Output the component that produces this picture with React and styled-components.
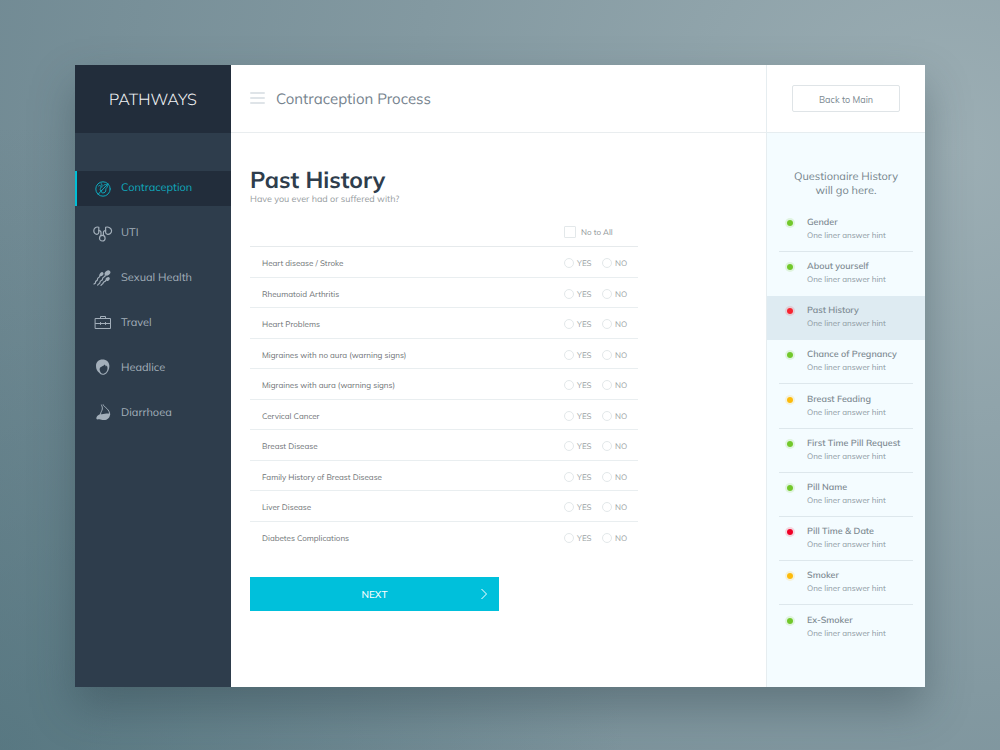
import React, { useState } from 'react';
import styled, { createGlobalStyle } from 'styled-components';

const GlobalStyle = createGlobalStyle`
  *, *::before, *::after { box-sizing: border-box; }
  body {
    margin: 0;
    font-family: Mulish, Muli, Lato, "Open Sans", sans-serif;
    text-rendering: geometricPrecision;
    color: #76838b;
  }
  h1, h2, p, ul { margin: 0; padding: 0; }
  ul { list-style: none; }
  button, input { font: inherit; margin: 0; }
`;

const Page = styled.div`
  display: grid;
  min-height: 100vh;
  padding: 65px 75px 63px;
  background:
    radial-gradient(circle at 0% 100%, rgba(75, 110, 120, 0.6), rgba(75, 110, 120, 0) 50%),
    radial-gradient(circle at 95% 20%, #9caeb4 0%, #8399a1 48%, #6c8690 100%);
`;

const Window = styled.div`
  display: grid;
  grid-template-columns: 156px minmax(0, 1fr) 159px;
  background: #fff;
  box-shadow: 0 20px 40px rgba(38, 58, 66, 0.36);
`;

const Sidebar = styled.aside`
  background: #2e3d4c;
`;

const Brand = styled.div`
  display: flex;
  align-items: center;
  justify-content: center;
  height: 68px;
  background: #222d3b;
  color: #f2f4f6;
  font-size: 16px;
  font-weight: 300;
`;

const NavList = styled.ul`
  display: grid;
  gap: 10px;
  padding-top: 38px;
`;

const NavLink = styled.a`
  display: flex;
  align-items: center;
  gap: 8px;
  height: 35px;
  padding: 0 0 4px 16px;
  border-left: 2px solid ${(p) => (p.$active ? '#00bfd6' : 'transparent')};
  background: ${(p) => (p.$active ? '#222d3b' : 'transparent')};
  color: ${(p) => (p.$active ? '#0fa9bd' : '#a3afba')};
  font-size: 11px;
  text-decoration: none;
  svg { flex: none; }
`;

const Main = styled.main`
  min-width: 0;
`;

const Header = styled.header`
  display: flex;
  align-items: center;
  gap: 11px;
  height: 68px;
  padding: 0 0 1px 19px;
  border-bottom: 1px solid #e9edef;
`;

const MenuButton = styled.button`
  display: grid;
  gap: 3px;
  width: 15px;
  padding: 0;
  border: 0;
  background: none;
  span {
    height: 2px;
    border-radius: 1px;
    background: #dfe4e8;
  }
`;

const HeaderTitle = styled.h2`
  color: #76838e;
  font-size: 15px;
  font-weight: 400;
`;

const Content = styled.form`
  padding: 33px 19px 76px;
`;

const Title = styled.h1`
  color: #2e3d4c;
  font-size: 23px;
  font-weight: 700;
  line-height: 28px;
`;

const Subtitle = styled.p`
  color: #979da1;
  font-size: 9px;
  line-height: 12px;
`;

const Questions = styled.table`
  width: 100%;
  max-width: 388px;
  margin-top: 12px;
  border-collapse: separate;
  border-spacing: 0;
  table-layout: fixed;
  th, td { padding: 0; vertical-align: middle; }
  thead tr { height: 29px; }
  thead th, thead td { border-bottom: 1px solid #e6eaec; }
  tbody tr { height: 30px; }
  tbody tr:nth-child(odd) { height: 31px; }
  tbody tr:not(:last-child) > * { border-bottom: 1px solid #e9eef0; }
`;

const Question = styled.th`
  && { padding: 2px 0 0 12px; }
  color: #6d7174;
  font-size: 8px;
  font-weight: 400;
  text-align: left;
`;

const AnswerCell = styled.td`
  && { padding-top: 2px; }
`;

const HeadCell = styled.th`
  text-align: left;
  font-weight: 400;
`;

const Choice = styled.label`
  display: flex;
  align-items: center;
  gap: ${(p) => (p.$wide ? '5px' : '3px')};
  color: ${(p) => (p.$wide ? '#8b9195' : '#999fa3')};
  font-size: 8px;
  line-height: 12px;
`;

const Tick = styled.input`
  appearance: none;
  flex: none;
  width: ${(p) => (p.type === 'radio' ? '10px' : '12px')};
  height: ${(p) => (p.type === 'radio' ? '10px' : '12px')};
  border: 1px solid #e3e8ea;
  border-radius: ${(p) => (p.type === 'radio' ? '50%' : '1px')};
  background: #fff;
  &:checked { background: #00c0db; box-shadow: inset 0 0 0 2px #fff; }
`;

const NextButton = styled.button`
  display: grid;
  grid-template-columns: 1fr auto 1fr;
  align-items: center;
  width: 100%;
  max-width: 249px;
  height: 34px;
  margin-top: 25px;
  padding: 0 12px;
  border: 0;
  background: #00c0db;
  color: #fff;
  font-size: 10px;
  font-weight: 500;
  span { grid-column: 2; }
  svg { justify-self: end; }
`;

const HistoryPanel = styled.aside`
  border-left: 1px solid #e6edf0;
  background: #f4fcff;
`;

const PanelTop = styled.div`
  display: flex;
  align-items: center;
  justify-content: center;
  height: 68px;
  border-bottom: 1px solid #e6edf0;
  background: #fff;
`;

const BackButton = styled.button`
  width: 108px;
  height: 27px;
  padding: 1px 0 0;
  border: 1px solid #dfe4e7;
  border-radius: 2px;
  background: #fff;
  color: #7b8890;
  font-size: 9px;
`;

const PanelTitle = styled.h2`
  padding: 36px 16px 11px;
  color: #74848c;
  font-size: 11px;
  font-weight: 400;
  line-height: 14px;
  text-align: center;
`;

const Step = styled.li`
  height: 44px;
  padding: 0 12px;
  background: ${(p) => (p.$active ? '#deebf2' : 'transparent')};
  &:nth-child(5n) { height: 45px; }
`;

const StepLink = styled.a`
  display: grid;
  grid-template-columns: 8px 1fr;
  column-gap: 13px;
  align-content: center;
  height: 100%;
  padding: 0 0 1px 7px;
  border-bottom: 1px solid ${(p) => (p.$divider ? '#dde7ec' : 'transparent')};
  text-decoration: none;
`;

const dotColors = { green: '#72c82b', red: '#f8232f', crimson: '#f00026', amber: '#fdbb0b' };

const Dot = styled.span`
  align-self: center;
  width: 8px;
  height: 8px;
  border: 1px solid transparent;
  border-radius: 50%;
  background: ${(p) => dotColors[p.$tone]};
  background-clip: padding-box;
  box-shadow: 0 0 0 1px ${(p) => dotColors[p.$tone]}26;
`;

const StepName = styled.span`
  color: #7c8991;
  font-size: 9px;
  font-weight: 600;
  line-height: 12px;
  white-space: nowrap;
`;

const StepHint = styled.span`
  grid-column: 2;
  color: #8c989f;
  font-size: 8px;
  line-height: 12px;
`;

const Glyph = ({ children }) => (
  <svg width="20" height="20" viewBox="0 0 20 20" fill="none" stroke="currentColor"
    strokeWidth="1" strokeLinecap="round" strokeLinejoin="round" aria-hidden="true">
    {children}
  </svg>
);

const icons = {
  contraception: (
    <Glyph>
      <circle cx="10" cy="12" r="7.2" />
      <path d="M15 6.800 5.200 17.200" />
      <path d="M10.800 8.200c2-1.800 4.400-.2 3.300 2-.6 1.100-1.600 1.300-1.300 2.500.4 1.800-1.200 3.500-3.200 3.200-1.600-.3-1.700-2-.6-3" />
      <path d="M5.600 9c1.300-1.500 2.900 0 2.200 1.600-.5 1.300-1.300 2.200 0 3.400M8.200 6.500c1 .9 1 2.200.7 3.600" />
    </Glyph>
  ),
  uti: (
    <Glyph>
      <g strokeWidth="1.200">
        <path d="M5.800 5.300C3 4.300.8 6.200.8 8.800c0 2.200 1.500 3.700 3.300 3.500 1.300-.1 1.700-1 1.700-2V5.300Z" />
        <path d="M12.600 5.300c2.800-1 6 .9 6 3.500 0 2.200-2 3.700-4 3.500-1.400-.1-2-1-2-2V5.300Z" />
        <path d="M5.800 8.600c1.500-.2 2.200.8 2.200 2v3M12.600 8.600c-1.500-.2-2.200.8-2.200 2v3" />
        <circle cx="9.300" cy="16.200" r="2.800" />
      </g>
    </Glyph>
  ),
  sexual: (
    <Glyph>
      <g fill="currentColor" stroke="none">
        <ellipse cx="14.500" cy="6" rx="3.200" ry="2.300" transform="rotate(-40 14.500 6)" />
        <ellipse cx="8.500" cy="7.200" rx="2.300" ry="1.700" transform="rotate(-40 8.500 7.200)" />
        <ellipse cx="14.700" cy="12" rx="2.300" ry="1.700" transform="rotate(-35 14.700 12)" />
      </g>
      <g strokeWidth="1.200">
        <path d="M12.300 8c.5 2.400-2.900 1.500-2.700 3.800s-2.700 1.200-2.600 3.300-2 1.600-2.300 3" />
        <path d="M6.800 8.700c.5 2.200-2.500 1.500-2.300 3.500s-2.200 1.300-2 3-1 1.100-1.500 1.800" />
        <path d="M12.700 13.300c.2 2-2.300.8-2.500 2.600s-1.700 1-2.200 2.600" />
      </g>
    </Glyph>
  ),
  travel: (
    <Glyph>
      <path d="M2.500 6.500h15v10h-15zM7.500 6.500v-2h5v2M2.500 11.500h15M7.500 10.500v2M12.500 10.500v2" />
    </Glyph>
  ),
  headlice: (
    <Glyph>
      <path fill="currentColor" stroke="none" fillRule="evenodd" d="M9.500 2.500c4 0 6.900 2.700 6.900 6.500 0 3-1.400 5.700-3.100 7.400-1 .9-2.200 1.300-3.500 1.300-1.600 0-2.700-.7-3.600-1.900C4.300 14.500 3 12 3 9 3 5.100 5.600 2.500 9.500 2.500Zm2.100 4.900c-.8 1.500-3 1.800-4.100 2.800-1 .9-1 2.300-.6 3.600.6 2 1.500 2.900 2.900 2.900 2.600 0 4.700-2.500 4.700-5.500 0-1.400-.4-2-1-2.600l-.5 1.200c-.2-.9-.7-1.700-1.400-2.400Z" />
    </Glyph>
  ),
  stomach: (
    <Glyph>
      <path d="M8.500 3c.6 1.500 1 2.500.8 4-.2 1.800-1.400 2.700-1.800 5M10.200 2.800c.5 1.700 2.200 2.200 3.600 3.700 1.800 1.800 2.900 3.600 2.900 6" />
      <path fill="currentColor" stroke="none" d="M7.200 12c3.100.8 6.200-1.200 9.900-.3.100 3.700-2.500 6.400-6.200 6.400-2.200 0-3-.9-4.700-.8-1.300.1-2.300.4-2.700-.3-.5-1 .2-2.800 1.300-3.600.8-.6 1.600-.7 2.400-1.400Z" />
    </Glyph>
  ),
};

const navItems = [
  ['contraception', 'Contraception'],
  ['uti', 'UTI'],
  ['sexual', 'Sexual Health'],
  ['travel', 'Travel'],
  ['headlice', 'Headlice'],
  ['stomach', 'Diarrhoea'],
];

const questions = [
  'Heart disease / Stroke',
  'Rheumatoid Arthritis',
  'Heart Problems',
  'Migraines with no aura (warning signs)',
  'Migraines with aura (warning signs)',
  'Cervical Cancer',
  'Breast Disease',
  'Family History of Breast Disease',
  'Liver Disease',
  'Diabetes Complications',
];

const steps = [
  ['Gender', 'green'],
  ['About yourself', 'green'],
  ['Past History', 'red'],
  ['Chance of Pregnancy', 'green'],
  ['Breast Feading', 'amber'],
  ['First Time Pill Request', 'green'],
  ['Pill Name', 'green'],
  ['Pill Time & Date', 'crimson'],
  ['Smoker', 'amber'],
  ['Ex-Smoker', 'green'],
];
const currentStep = 2;

const AnswerColumn = styled.col`
  width: ${(p) => p.$width};
`;

export default function App() {
  const [answers, setAnswers] = useState({});
  const allNo = questions.every((q) => answers[q] === 'NO');
  const toggleAll = (e) =>
    setAnswers(e.target.checked ? Object.fromEntries(questions.map((q) => [q, 'NO'])) : {});

  return (
    <>
      <GlobalStyle />
      <Page>
        <Window>
          <Sidebar>
            <Brand>PATHWAYS</Brand>
            <nav>
              <NavList>
                {navItems.map(([icon, label], i) => (
                  <li key={icon}>
                    <NavLink href={`#${icon}`} $active={i === 0}>
                      {icons[icon]}
                      {label}
                    </NavLink>
                  </li>
                ))}
              </NavList>
            </nav>
          </Sidebar>

          <Main>
            <Header>
              <MenuButton type="button" aria-label="Menu">
                <span /><span /><span />
              </MenuButton>
              <HeaderTitle>Contraception Process</HeaderTitle>
            </Header>
            <Content onSubmit={(e) => e.preventDefault()}>
              <Title>Past History</Title>
              <Subtitle>Have you ever had or suffered with?</Subtitle>
              <Questions>
                <colgroup>
                  <col />
                  <AnswerColumn $width="38px" />
                  <AnswerColumn $width="36px" />
                </colgroup>
                <thead>
                  <tr>
                    <td />
                    <HeadCell colSpan={2}>
                      <Choice $wide>
                        <Tick type="checkbox" checked={allNo} onChange={toggleAll} />
                        No to All
                      </Choice>
                    </HeadCell>
                  </tr>
                </thead>
                <tbody>
                  {questions.map((q) => (
                    <tr key={q}>
                      <Question scope="row">{q}</Question>
                      {['YES', 'NO'].map((value) => (
                        <AnswerCell key={value}>
                          <Choice>
                            <Tick type="radio" name={q} checked={answers[q] === value}
                              onChange={() => setAnswers({ ...answers, [q]: value })} />
                            {value}
                          </Choice>
                        </AnswerCell>
                      ))}
                    </tr>
                  ))}
                </tbody>
              </Questions>
              <NextButton type="submit">
                <span>NEXT</span>
                <svg width="6" height="12" viewBox="0 0 6 12" fill="none" stroke="currentColor" aria-hidden="true">
                  <path d="M.5 1 5.500 6 .5 11" />
                </svg>
              </NextButton>
            </Content>
          </Main>

          <HistoryPanel>
            <PanelTop>
              <BackButton type="button">Back to Main</BackButton>
            </PanelTop>
            <PanelTitle>Questionaire History<br />will go here.</PanelTitle>
            <ul>
              {steps.map(([name, tone], i) => (
                <Step key={name} $active={i === currentStep}>
                  <StepLink href={`#step-${i + 1}`}
                    $divider={i !== currentStep && i !== currentStep - 1 && i < steps.length - 1}>
                    <Dot $tone={tone} />
                    <StepName>{name}</StepName>
                    <StepHint>One liner answer hint</StepHint>
                  </StepLink>
                </Step>
              ))}
            </ul>
          </HistoryPanel>
        </Window>
      </Page>
    </>
  );
}
